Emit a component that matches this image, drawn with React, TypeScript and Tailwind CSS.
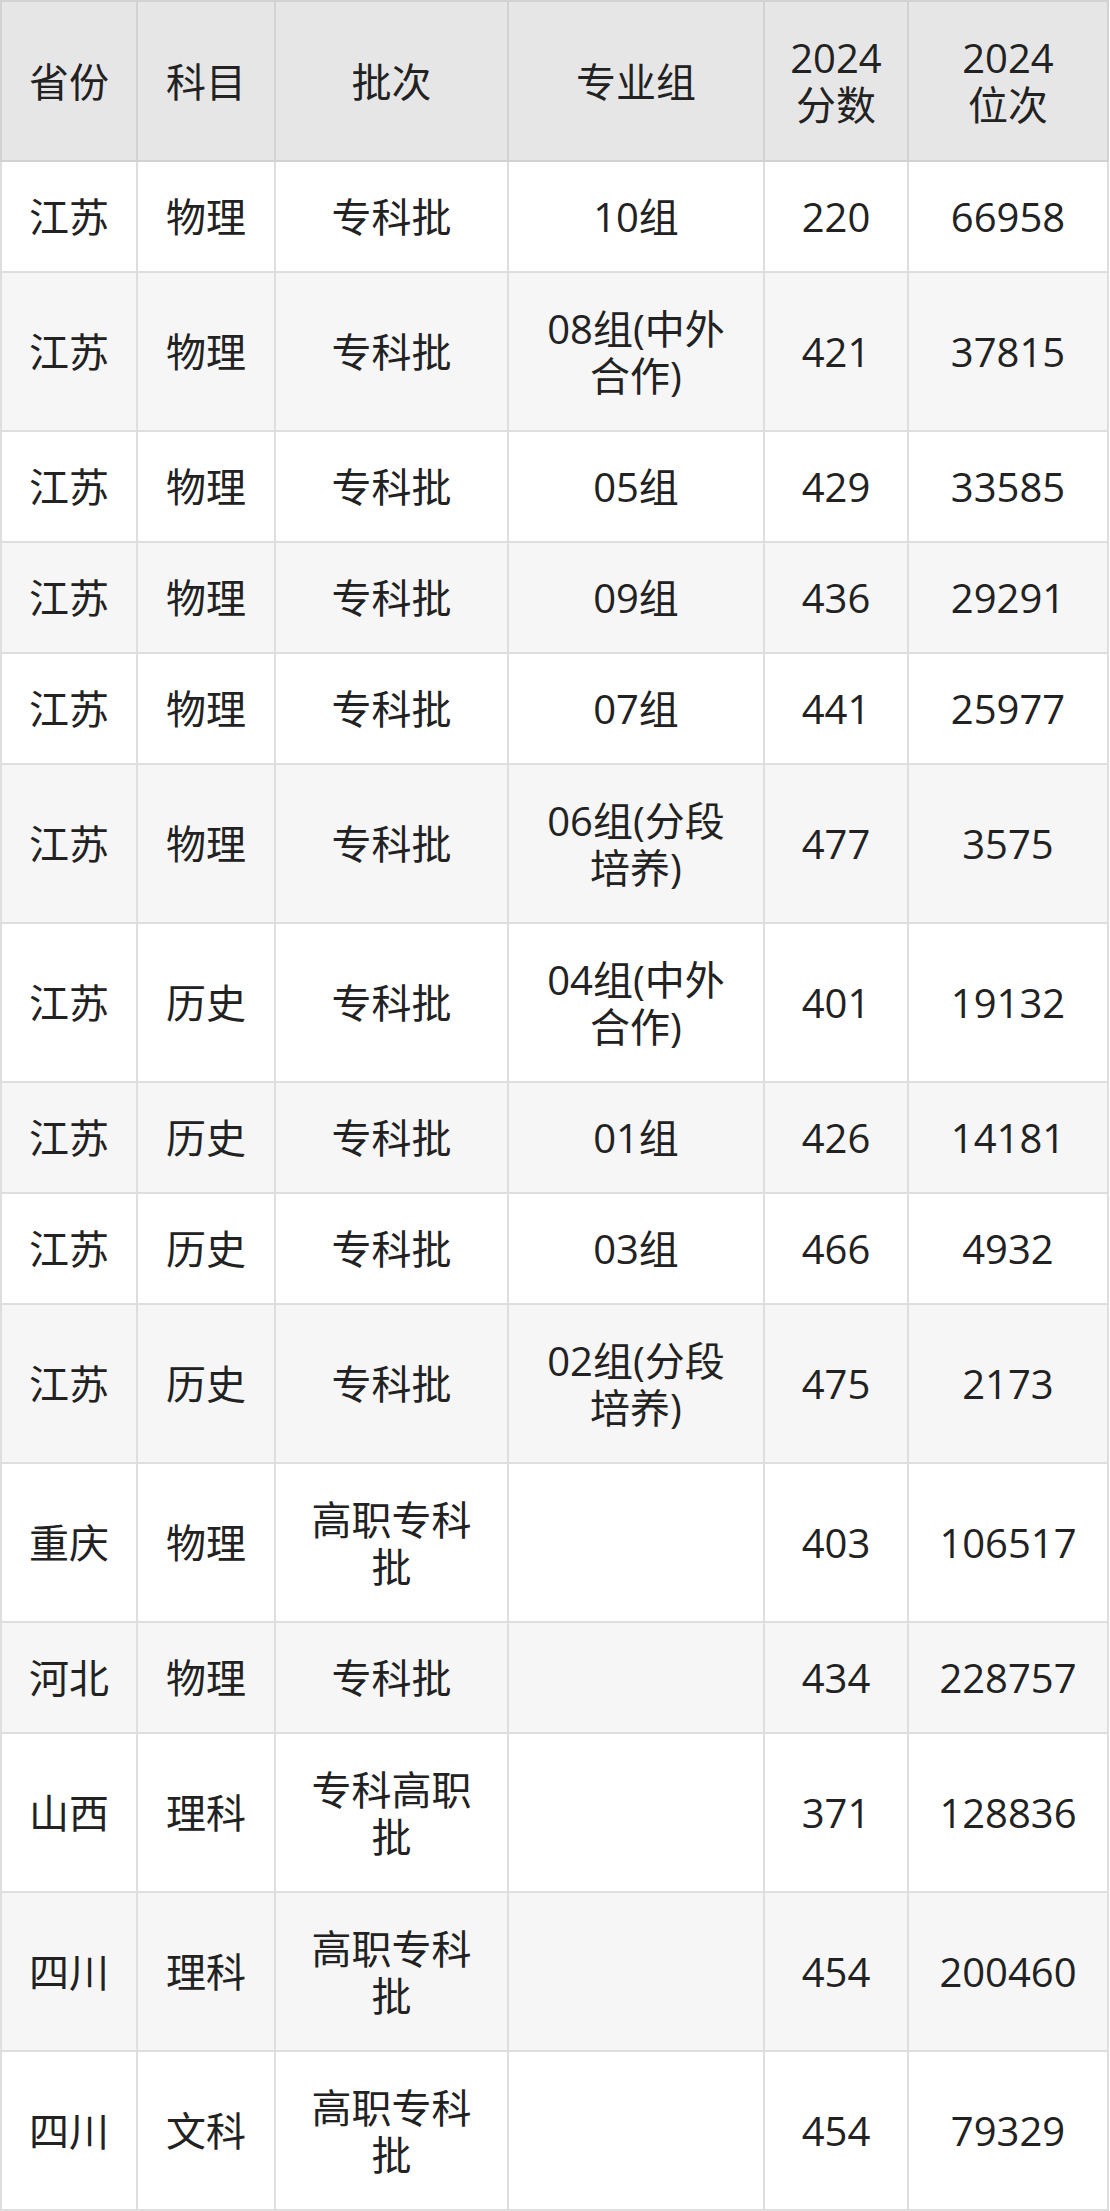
const rows: string[][] = [
  ['江苏', '物理', '专科批', '10组', '220', '66958'],
  ['江苏', '物理', '专科批', '08组(中外\n合作)', '421', '37815'],
  ['江苏', '物理', '专科批', '05组', '429', '33585'],
  ['江苏', '物理', '专科批', '09组', '436', '29291'],
  ['江苏', '物理', '专科批', '07组', '441', '25977'],
  ['江苏', '物理', '专科批', '06组(分段\n培养)', '477', '3575'],
  ['江苏', '历史', '专科批', '04组(中外\n合作)', '401', '19132'],
  ['江苏', '历史', '专科批', '01组', '426', '14181'],
  ['江苏', '历史', '专科批', '03组', '466', '4932'],
  ['江苏', '历史', '专科批', '02组(分段\n培养)', '475', '2173'],
  ['重庆', '物理', '高职专科\n批', '', '403', '106517'],
  ['河北', '物理', '专科批', '', '434', '228757'],
  ['山西', '理科', '专科高职\n批', '', '371', '128836'],
  ['四川', '理科', '高职专科\n批', '', '454', '200460'],
  ['四川', '文科', '高职专科\n批', '', '454', '79329'],
];

const headers = ['省份', '科目', '批次', '专业组', '2024\n分数', '2024\n位次'];

export default function App() {
  return (
    <div className="w-[1110px] bg-white font-['Open_Sans','Noto_Sans_CJK_SC',sans-serif] text-[40px] leading-[47px] text-[#222222]">
      <table className="w-[1109px] table-fixed border-collapse border-2 border-[#d6d6d6]">
        <colgroup>
          <col className="w-[136px]" />
          <col className="w-[138px]" />
          <col className="w-[233px]" />
          <col className="w-[256px]" />
          <col className="w-[144px]" />
          <col className="w-[200px]" />
        </colgroup>
        <thead>
          <tr className="bg-[#e6e6e6]">
            {headers.map((h, i) => (
              <th
                key={i}
                className="h-[160px] whitespace-pre-line border-2 border-[#d2d2d2] px-2 py-0 text-center font-normal"
              >
                {h}
              </th>
            ))}
          </tr>
        </thead>
        <tbody>
          {rows.map((row, ri) => {
            const tall = row.some((c) => c.includes('\n'));
            return (
              <tr key={ri} className={ri % 2 === 1 ? 'bg-[#f6f6f6]' : 'bg-white'}>
                {row.map((cell, ci) => (
                  <td
                    key={ci}
                    className={`${tall ? 'h-[159px]' : 'h-[111px]'} whitespace-pre-line border-2 border-[#dedede] px-2 py-0 text-center align-middle`}
                  >
                    {cell}
                  </td>
                ))}
              </tr>
            );
          })}
        </tbody>
      </table>
    </div>
  );
}
